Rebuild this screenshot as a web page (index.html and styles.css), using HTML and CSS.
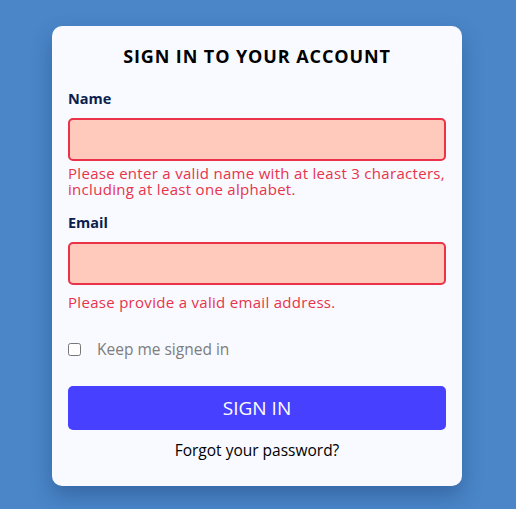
FILE: index.html
```html
<!DOCTYPE html>
<html lang="en">
<head>
<meta charset="utf-8">
<title>Sign in</title>
<link rel="stylesheet" href="styles.css">
</head>
<body>
<main class="page">
  <form class="card" novalidate>
    <h1 class="title">SIGN IN TO YOUR ACCOUNT</h1>
    <div class="field">
      <label class="label" for="name">Name</label>
      <input class="input invalid" id="name" type="text">
      <p class="error">Please enter a valid name with at least 3 characters, including at least one alphabet.</p>
    </div>
    <div class="field">
      <label class="label" for="email">Email</label>
      <input class="input invalid" id="email" type="email">
      <p class="error error-spaced">Please provide a valid email address.</p>
    </div>
    <label class="remember">
      <input class="check" type="checkbox">
      <span>Keep me signed in</span>
    </label>
    <button class="submit" type="button">SIGN IN</button>
    <a class="forgot" href="#">Forgot your password?</a>
  </form>
</main>
</body>
</html>
```
FILE: styles.css
```css
* { box-sizing: border-box; }
html, body { margin: 0; padding: 0; }
body {
  background: #4a86c8;
  font-family: "Open Sans", "Noto Sans", sans-serif;
  width: 516px;
  height: 509px;
  overflow: hidden;
}
.page {
  display: flex;
  justify-content: flex-start;
  padding: 26px 0 0 52px;
}
.card {
  width: 410px;
  height: 460px;
  background: #f8faff;
  border-radius: 10px;
  padding: 16px 16px 0;
  display: flex;
  flex-direction: column;
  box-shadow: 0 10px 20px rgba(20, 50, 100, 0.35);
}
.title {
  margin: 0;
  font-size: 18px;
  font-weight: 700;
  text-align: center;
  color: #000;
  line-height: 28px;
  letter-spacing: 0.9px;
}
.field {
  display: flex;
  flex-direction: column;
}
.field:first-of-type { margin-top: 20px; }
.label {
  font-size: 14.5px;
  font-weight: 700;
  color: #0b1e4e;
  line-height: 18px;
  margin-bottom: 10px;
}
.field + .field { margin-top: 17px; }
.input {
  height: 43px;
  width: 100%;
  border: 2px solid #ea3248;
  background: #ffc9bb;
  border-radius: 5px;
  margin: 0;
}
.error {
  margin: 4px 0 0;
  color: #e8334a;
  font-size: 15px;
  letter-spacing: 0.3px;
  line-height: 16px;
}
.error-spaced { margin-top: 9px; }
.remember {
  display: flex;
  align-items: center;
  margin-top: 29px;
  color: #7d7d7d;
  font-size: 15.5px;
  line-height: 20px;
}
.check {
  width: 13px;
  height: 13px;
  margin: 0 16px 0 0;
}
.submit {
  margin-top: 27px;
  height: 44px;
  border: none;
  border-radius: 5px;
  background: #4840ff;
  color: #fff;
  font-family: inherit;
  font-size: 19px;
}
.forgot {
  margin-top: 10px;
  text-align: center;
  color: #000;
  text-decoration: none;
  font-size: 15.5px;
  line-height: 20px;
}
```
